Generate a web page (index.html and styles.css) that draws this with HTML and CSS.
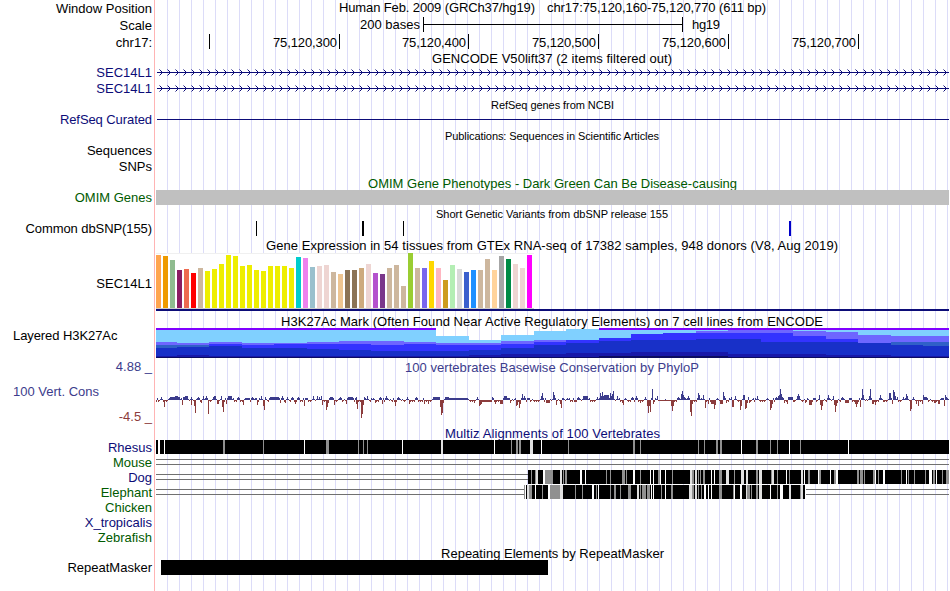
FILE: index.html
```
<!DOCTYPE html>
<html lang="en">
<head>
<meta charset="utf-8">
<title>Genome Browser</title>
<link rel="stylesheet" href="styles.css">
</head>
<body>
<main class="browser">
<div class="row h17"><div class="label">Window Position</div><svg class="track" viewBox="156 0 794 17"><text class="title" x="339" y="12" textLength="196">Human Feb. 2009 (GRCh37/hg19)</text><text class="title" x="547" y="12" textLength="219">chr17:75,120,160-75,120,770 (611 bp)</text></svg></div>
<div class="row h17"><div class="label">Scale</div><svg class="track" viewBox="156 17 794 17"><text x="360" y="29" textLength="60">200 bases</text><path class="rule" d="M423.5 17V32M423 24.5H683M682.5 17V32"/><text x="692" y="29" textLength="28">hg19</text></svg></div>
<div class="row h30"><div class="label">chr17:</div><svg class="track" viewBox="156 34 794 30"><path class="rule" d="M209.5 34V49M339.5 34V49M468.5 34V49M598.5 34V49M728.5 34V49M858.5 34V49"/><text x="273" y="47" textLength="64">75,120,300</text><text x="402" y="47" textLength="64">75,120,400</text><text x="532" y="47" textLength="64">75,120,500</text><text x="662" y="47" textLength="64">75,120,600</text><text x="792" y="47" textLength="64">75,120,700</text><text x="432" y="63" textLength="240">GENCODE V50lift37 (2 items filtered out)</text></svg></div>
<div class="row h16 navy"><div class="label">SEC14L1</div><svg class="track" viewBox="156 64 794 16"><path class="gene" d="M157 72.5H949"/><path class="chevrons" data-y="72.5"/></svg></div>
<div class="row h31 navy"><div class="label">SEC14L1</div><svg class="track" viewBox="156 80 794 31"><path class="gene" d="M157 88.5H949"/><path class="chevrons" data-y="88.5"/><text class="small black" x="491" y="109" textLength="123">RefSeq genes from NCBI</text></svg></div>
<div class="row h31 navy"><div class="label snug">RefSeq Curated</div><svg class="track" viewBox="156 111 794 31"><path class="gene" d="M157 119.5H949"/><text class="small black" x="445" y="140" textLength="214">Publications: Sequences in Scientific Articles</text></svg></div>
<div class="row h16"><div class="label">Sequences</div></div>
<div class="row h31"><div class="label">SNPs</div><svg class="track green" viewBox="156 158 794 31"><text x="368" y="188" textLength="369">OMIM Gene Phenotypes - Dark Green Can Be Disease-causing</text></svg></div>
<div class="row h31"><div class="label green">OMIM Genes</div><svg class="track" viewBox="156 189 794 31"><rect class="omim" x="156" y="190" width="793" height="15"/><text class="small" x="436" y="218" textLength="232">Short Genetic Variants from dbSNP release 155</text></svg></div>
<div class="row h32"><div class="label snug">Common dbSNP(155)</div><svg class="track" viewBox="156 220 794 32"><path class="rule" d="M256.5 221V236M403.5 221V236"/><rect x="362" y="221" width="2" height="15"/><rect class="snp" x="789" y="221" width="2" height="15"/><text x="266" y="250" textLength="572">Gene Expression in 54 tissues from GTEx RNA-seq of 17382 samples, 948 donors (V8, Aug 2019)</text></svg></div>
<div class="row h75"><div class="label drop23">SEC14L1</div><svg class="track" viewBox="156 252 794 75"><rect class="panel" x="156" y="253" width="378" height="55"/><path class="paneltop" d="M156 253.5H534"/><path class="panelbase" d="M156 308.5H534"/><g id="gtex"></g><rect class="nav" x="156" y="309" width="793" height="2"/><text x="281" y="326" textLength="542">H3K27Ac Mark (Often Found Near Active Regulatory Elements) on 7 cell lines from ENCODE</text></svg></div>
<div class="row h31"><div class="label left snug">Layered H3K27Ac</div><svg class="track" viewBox="156 327 794 31"><g id="h3k"></g></svg></div>
<div class="row h67 cons"><div class="scale"><div class="label">4.88 _</div><div class="label left">100 Vert. Cons</div><div class="label red">-4.5 _</div></div><svg class="track" viewBox="156 358 794 67"><text x="405" y="372" textLength="294">100 vertebrates Basewise Conservation by PhyloP</text><path id="consUp"/><path id="consDown"/></svg></div>
<div class="row h29 navy"><div class="label drop14">Rhesus</div><svg class="track" viewBox="156 425 794 29"><text x="445" y="438" textLength="215">Multiz Alignments of 100 Vertebrates</text><g id="rhesus"></g></svg></div>
<div class="row h15 green"><div class="label">Mouse</div><svg class="track" viewBox="156 454 794 15"><path class="gap" d="M156 459.5H949M156 464.5H949"/></svg></div>
<div class="row h15 navy"><div class="label">Dog</div><svg class="track" viewBox="156 469 794 15"><path class="gap" d="M156 474.5H528M156 479.5H528"/><g id="dog"></g></svg></div>
<div class="row h15 green"><div class="label">Elephant</div><svg class="track" viewBox="156 484 794 15"><path class="gap" d="M156 489.5H524M156 494.5H524M806 489.5H949M806 494.5H949"/><g id="elephant"></g></svg></div>
<div class="row h15 green"><div class="label">Chicken</div></div>
<div class="row h15 navy"><div class="label">X_tropicalis</div></div>
<div class="row h30 green"><div class="label">Zebrafish</div><svg class="track black" viewBox="156 529 794 30"><text x="441" y="558" textLength="223">Repeating Elements by RepeatMasker</text></svg></div>
<div class="row h32"><div class="label">RepeatMasker</div><svg class="track" viewBox="156 559 794 32"><rect x="161" y="560" width="387" height="15"/></svg></div>
</main>
<script src="script.js"></script>
</body>
</html>
```
FILE: styles.css
```
body { margin: 0; background: #fff; }
.browser {
  width: 950px;
  height: 591px;
  overflow: hidden;
  color: #000;
  font: 13px/17px "Liberation Sans", Arial, sans-serif;
  background:
    linear-gradient(#ffb4b4, #ffb4b4) 154px 0 / 1px 100% no-repeat,
    repeating-linear-gradient(90deg, #dcdcf8 0 1px, transparent 1px 12px) 167px 0 / 783px 100% no-repeat;
}
.row { display: grid; grid-template-columns: 152px 794px; column-gap: 4px; }
.label { text-align: right; white-space: nowrap; height: 15px; }
.left { text-align: left; padding-left: 13px; }
.snug { letter-spacing: -.08px; }
.drop14 { padding-top: 14px; }
.drop23 { padding-top: 23px; }
.track { display: block; width: 794px; height: 100%; overflow: visible; fill: currentColor; shape-rendering: crispEdges; }
.h15 { height: 15px; }
.h16 { height: 16px; }
.h17 { height: 17px; }
.h29 { height: 29px; }
.h30 { height: 30px; }
.h31 { height: 31px; }
.h32 { height: 32px; }
.h67 { height: 67px; }
.h75 { height: 75px; }
.navy { color: #0c0c78; }
.green { color: #005a00; }
.black { color: #000; fill: #000; }
.small { font-size: 11px; }
.cons { color: #3c3c8c; }
.red { color: #8c3c3c; }
.scale { display: flex; flex-direction: column; gap: 10px; }
.rule { stroke: #000; fill: none; }
.gene { stroke: #0c0c78; }
.chevrons { stroke: #0c0c78; stroke-width: 1; fill: none; shape-rendering: auto; }
.omim { fill: #c0c0c0; }
.snp { fill: #0000c8; }
.panel { fill: #fff; }
.paneltop { stroke: #f0f0f0; }
.panelbase { stroke: #ccc; }
.nav { fill: #0c0c78; }
.gap { stroke: #707070; }
#consUp { fill: #3c3c8c; }
#consDown { fill: #8c3c3c; }
```
FILE: script.js
```
const NS = 'http://www.w3.org/2000/svg';
function rect(g, x, y, w, h, fill) {
  const r = document.createElementNS(NS, 'rect');
  Object.entries({ x, y, width: w, height: h, fill }).forEach(([k, v]) => r.setAttribute(k, v));
  g.appendChild(r);
}
const byId = id => document.getElementById(id);

// Strand direction arrows, one every 8px
document.querySelectorAll('.chevrons').forEach(p => {
  const y = +p.dataset.y;
  let d = '';
  for (let x = 159.5; x < 947; x += 8) d += `M${x} ${y - 3}l3 3l-3 3`;
  p.setAttribute('d', d);
});

// Tissue expression: top edge and colour
const tissues = `255 ffa54f,256 ee9a00,260 8fbc8f,270 8b1c62,269 ee6a50,273 ff0000,268 cdb79e,271 eeee00,269 eeee00,264 eeee00,255 eeee00,256 eeee00,266 eeee00,265 eeee00,270 eeee00,271 eeee00,266 eeee00,266 eeee00,266 eeee00,268 eeee00,257 00cdcd,258 ee82ee,267 9ac0cd,266 eed5d2,265 eed5d2,272 cdb79e,274 eec591,270 8b7355,270 8b7355,268 cdaa7d,264 eed5d2,273 b452cd,274 7a378b,268 cdb79e,265 cdb79e,286 cdb79e,253 9acd32,268 cdb79e,268 7a67ee,261 ffd700,268 ffb6c1,280 cd9b1d,265 b4eeb4,269 d9d9d9,272 3a5fcd,270 1e90ff,270 cdb79e,259 cdb79e,270 ffd39b,256 a6a6a6,259 008b45,264 eed5d2,268 eed5d2,255 ff00ff`;
tissues.split(',').forEach((t, i) => {
  const [top, c] = t.split(' ');
  rect(byId('gtex'), 156 + 7 * i, +top, 5, 308 - top, '#' + c);
});

// Histone layers: x, then top of light, violet, steel, blue, dark, navy, black
const layers = [
  [156,328,342,345,348,348,356,357],[177,328,343,345,347,347,355,357],[209,328,342,344,344,346,356,357],
  [242,328,343,345,345,348,356,357],[274,328,343,344,344,348,356,357],[307,328,342,344,344,349,356,357],
  [339,328,341,344,344,350,356,357],[371,328,341,345,345,351,356,357],[404,328,342,344,344,351,356,357],
  [436,336,343,345,345,351,356,357],[469,340,343,345,345,350,355,357],[501,335,341,344,344,348,354,357],
  [534,331,340,342,342,345,354,357],[566,329,340,340,340,343,353,357],[599,328,338,338,338,341,353,356],
  [631,328,334,334,334,340,352,356],[663,328,333,333,333,340,352,356],[696,328,331,333,333,339,352,356],
  [728,328,330,333,333,339,354,357],[761,328,330,333,333,342,354,357],[793,328,331,336,336,342,354,357],
  [826,328,332,339,339,342,355,357],[858,328,335,343,343,343,355,357],[891,328,336,342,345,345,356,357],
  [923,328,336,342,346,346,356,357]
];
const shades = ['#80d0ff', '#6e66ff', '#3060c8', '#3333ff', '#1830c8', '#1818a8', '#0c0c60'];
layers.forEach((l, i) => {
  const w = (layers[i + 1] || [949])[0] - l[0];
  shades.forEach((s, k) => {
    const bottom = k < 6 ? l[k + 2] : 358;
    if (bottom > l[k + 1]) rect(byId('h3k'), l[0], l[k + 1], w, bottom - l[k + 1], s);
  });
  if (l[1] === 328) rect(byId('h3k'), l[0], 328, w, 2, '#8000ff');
});

// Conservation peaks as x:height or x-x:height; the rest is a low baseline
const up = '161:3 170-174:3 175-177:4 178-179:3 183-184:3 185-187:4 191:3 198:3 203:4 206:4 213:3 214-215:4 221:4 228-231:4 238:3 245-248:2 252:3 256:2 261:4 265:3 270-278:3 282:4 287:3 292:3 298:3 306:2 313:4 317:4 319:3 321:4 330-332:3 340:3 348-352:3 356:3 364:3 367:4 373:2 380:3 386:4 398:3 407:3 416:3 433-439:3 445-448:3 450-467:2 477:3 492:3 504-506:4 508:2 515:2 522:6 524:4 528:2 541:4 542:7 553:8 554:5 562:2 567:2 578:3 583-587:4 597:3 600:7 601:4 602:8 603:4 604-608:5 610:7 611:4 612:6 613:9 617:4 625:2 632:3 636:4 645:3 652:11 657:4 665:1 678:3 681:6 682:9 683:5 684:3 688:4 698:7 699:5 703:5 717:2 723:8 724:4 731:3 735:4 743-744:5 748:3 757:4 767:2 776:3 778:4 779:5 780:11 781:6 782:3 788-792:3 797:4 798:6 799:4 814:2 819:5 828:5 833:4 842:3 850:2 862:11 863:5 869:4 870:11 880:5 889-890:7 893:10 894:8 895:4 897:3 903:3 906:6 907:4 913:3 923:5 924-926:3 942:2 945:5 946:3';
const down = '163:2 164:7 182:5 191:5 194:6 195:13 201:3 208:14 217-218:4 222:7 223:12 226:4 234:2 243:5 257:5 263:6 264:10 280:3 285:3 295:4 304:6 322:5 326:10 327:7 328:3 334:5 346:4 356:4 357:9 361:18 362:14 363:5 375:3 382:4 395:6 409:4 418:2 424:4 428:4 440:7 441:15 442:13 443:3 474:3 479:6 480:5 481:4 482-491:2 495:4 500-502:4 510:3 516:6 517:5 519:8 520:4 546-549:3 556:5 560:4 561:8 575:2 622:3 623:5 628:2 640:3 647:6 648:13 649:6 650:12 653:4 658-671:1 671:6 672:11 673:6 690:12 691:16 692:4 705:8 708:4 711-713:4 714:9 715:5 720-722:4 726:3 732-733:7 740:10 741:6 745:9 746:8 747:3 749:3 770:10 771:8 772:4 784:3 787:4 793:2 805:3 809-811:5 820:5 821:10 822:6 834:5 835:12 836:6 837:3 845-848:3 855:4 856:7 857:4 860:7 872-873:4 875:5 883:2 892:4 898:2 910:11 911:9 916:4 918:6 922:4 934-935:3 938-939:4 944:6';
function expand(spec) {
  const m = {};
  spec.split(' ').forEach(s => {
    const [r, h] = s.split(':');
    const [a, b = a] = r.split('-');
    for (let x = +a; x <= +b; x++) m[x] = +h;
  });
  return m;
}
const U = expand(up), D = expand(down);
let du = '', dd = '', seed = 17;
for (let x = 156; x < 949; x++) {
  seed = (seed * 1103 + 12345) % 65536;
  let u = U[x] || 0, d = D[x] || 0;
  if (!u && !d) {
    if (U[x - 1] || U[x + 1] || seed % 5 === 0) u = 1 + seed % 2;
    else d = 1 + (seed % 4 === 0 ? 1 : 0);
  }
  if (u) du += `M${x} ${400 - u}h1v${u}h-1z`;
  if (d) dd += `M${x} 400h1v${d}h-1z`;
}
byId('consUp').setAttribute('d', du);
byId('consDown').setAttribute('d', dd);

// Alignment blocks: w = no base, l = weak, g = partial; number is x, then width
function align(id, x0, x1, y, spec) {
  const g = byId(id);
  rect(g, x0, y, x1 - x0, 14, '#000');
  spec.split(' ').forEach(s => {
    const [x, w = 1] = s.slice(1).split('+');
    rect(g, +x, y, +w, 14, { w: '#fff', l: '#e0e0e0', g: '#909090' }[s[0]]);
  });
}
align('rhesus', 156, 949, 440, 'w158+2 w164 g223+2 g263 w304 g326+3 g358 g363 g367 w402 l441+2 w494 g511 g516+2 g519+2 l530+3 w541 g568 g633+2 g640 g698 g704 g716+2 g720+2 w741 g756+2 g770 g777 w789 g800 w848');
align('dog', 528, 949, 470, 'g531 g535 l536+2 w543+2 g545+8 l560+2 g563 g565+2 w580+2 w585 g606 g610 g622+3 g626 w633+2 g640 w650 w653 g658+2 w660 w665 g672 l690+2 g692+2 l695+2 g698 g700 g703+2 w711 w714 g719+3 l726+3 g734 l741+3 l746+2 g756+2 l759+3 g771 l772+2 g777 w786 g789 l801+2 w804 g808+2 w818 g819+2 w830 g834+2 w836+2 g857+2 g860+3 g864 g873+2 w875 g878 w883+2 g901 w906 g908 g914 g925 w929+3 g933+2 w936 g942 g946+3');
align('elephant', 524, 805, 485, 'g524 w525 l527+2 g529+3 w535 g542 w548+2 g550+10 l560+3 g575 g582 w592+2 g596 w598 g610 g614+2 g620 g628+3 l637+2 g640 g642+4 g647+3 w651 w653 g661 w665 g671+2 l689+3 g692+2 l695+2 g698 g701 w704+2 w708 w711 g719+3 g733 w734 w740+2 l746 g747+3 g751 g756+2 l759+3 w770 g777 w780+3 l789+2 g800 l801+2');
```
